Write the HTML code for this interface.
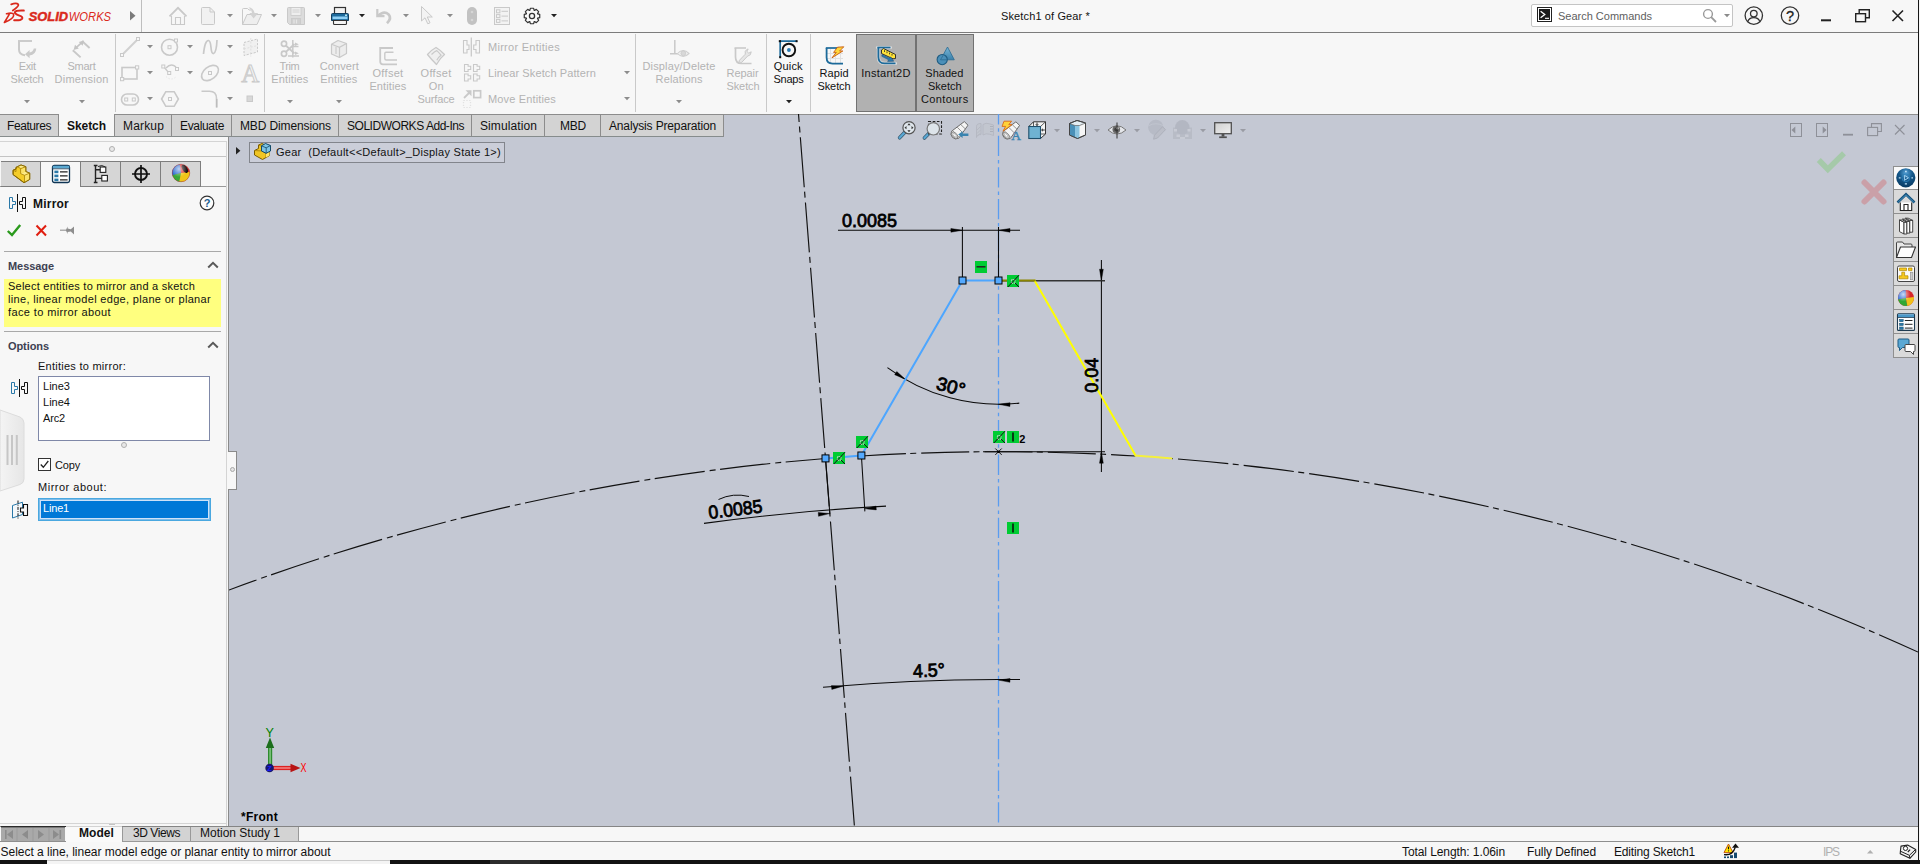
<!DOCTYPE html>
<html><head><meta charset="utf-8"><title>Sketch1 of Gear *</title>
<style>
*{box-sizing:border-box;margin:0;padding:0}
html,body{width:1920px;height:864px;overflow:hidden;background:#f7f7f7;font-family:"Liberation Sans",sans-serif;font-size:12px;color:#111}
.b{position:absolute}
.t{position:absolute;white-space:pre}
.ic{position:absolute;overflow:visible}
#vp{position:absolute;left:229px;top:114px}

</style></head><body>
<!-- title bar -->
<div class="b" style="left:0;top:32px;width:1918px;height:1px;background:#7c7c7c"></div>
<div class="b" style="left:141px;top:0;width:1px;height:32px;background:#bebebe"></div>
<!-- search box -->
<div class="b" style="left:1531px;top:4px;width:202px;height:23px;background:#fff;border:1px solid #c4c4c4;border-radius:2px"></div>
<!-- ribbon separators -->
<div class="b" style="left:115px;top:34px;width:1px;height:78px;background:#c9c9c9"></div>
<div class="b" style="left:264px;top:34px;width:1px;height:78px;background:#c9c9c9"></div>
<div class="b" style="left:635px;top:34px;width:1px;height:78px;background:#c9c9c9"></div>
<div class="b" style="left:766px;top:34px;width:1px;height:78px;background:#c9c9c9"></div>
<div class="b" style="left:810px;top:34px;width:1px;height:78px;background:#c9c9c9"></div>
<!-- pressed buttons -->
<div class="b" style="left:856px;top:34px;width:60px;height:78px;background:#b1b1b1;border:1px solid #727272"></div>
<div class="b" style="left:916px;top:34px;width:58px;height:78px;background:#b1b1b1;border:1px solid #727272"></div>
<!-- viewport bg -->
<div class="b" style="left:229px;top:114px;width:1689px;height:713px;background:#c4c8d3"></div>
<div class="b" style="left:724px;top:114px;width:1196px;height:1px;background:#8f8f8f"></div>
<!-- command manager tabs -->
<div class="b" style="left:0;top:114px;width:724px;height:23px;background:#d3d3d3;border-top:1px solid #8c8c8c;border-bottom:1px solid #868c8c"></div>
<div class="b" style="left:59px;top:114px;width:55px;height:22px;background:#f7f7f7"></div>
<div class="b" style="left:58px;top:114px;width:1px;height:23px;background:#8c8c8c"></div>
<div class="b" style="left:114px;top:114px;width:1px;height:23px;background:#8c8c8c"></div>
<div class="b" style="left:171px;top:114px;width:1px;height:23px;background:#8c8c8c"></div>
<div class="b" style="left:231px;top:114px;width:1px;height:23px;background:#8c8c8c"></div>
<div class="b" style="left:338px;top:114px;width:1px;height:23px;background:#8c8c8c"></div>
<div class="b" style="left:471px;top:114px;width:1px;height:23px;background:#8c8c8c"></div>
<div class="b" style="left:544px;top:114px;width:1px;height:23px;background:#8c8c8c"></div>
<div class="b" style="left:600px;top:114px;width:1px;height:23px;background:#8c8c8c"></div>
<div class="b" style="left:723px;top:114px;width:1px;height:23px;background:#8c8c8c"></div>
<!-- left panel -->
<div class="b" style="left:0;top:137px;width:228px;height:689px;background:#f7f7f7"></div>
<div class="b" style="left:228px;top:137px;width:1px;height:689px;background:#8a8a8a"></div>
<div class="b" style="left:226px;top:141px;width:1px;height:685px;background:#d4d4d4"></div>
<div class="b" style="left:0;top:141px;width:226px;height:1px;background:#d4d4d4"></div>
<div class="b" style="left:0;top:156px;width:226px;height:1px;background:#c4c4c4"></div>
<div class="b" style="left:109px;top:146px;width:6px;height:6px;border:1px solid #b0b0b0;border-radius:3px;background:#e8e8e8"></div>
<!-- panel tabs -->
<div class="b" style="left:0;top:186px;width:226px;height:1px;background:#9a9a9a"></div>
<div class="b" style="left:1px;top:161px;width:200px;height:26px;background:#d6d6d6;border-top:1px solid #7e7e7e;border-bottom:1px solid #7e7e7e"></div>
<div class="b" style="left:41px;top:162px;width:39px;height:25px;background:#f7f7f7"></div>
<div class="b" style="left:40px;top:161px;width:1px;height:26px;background:#7e7e7e"></div>
<div class="b" style="left:80px;top:161px;width:1px;height:26px;background:#7e7e7e"></div>
<div class="b" style="left:120px;top:161px;width:1px;height:26px;background:#7e7e7e"></div>
<div class="b" style="left:160px;top:161px;width:1px;height:26px;background:#7e7e7e"></div>
<div class="b" style="left:200px;top:161px;width:1px;height:26px;background:#7e7e7e"></div>
<!-- panel separators -->
<div class="b" style="left:4px;top:251px;width:217px;height:1px;background:#a9a9a9"></div>
<div class="b" style="left:4px;top:279px;width:217px;height:48px;background:#ffff7f"></div>
<div class="b" style="left:4px;top:331px;width:217px;height:1px;background:#a9a9a9"></div>
<!-- listbox -->
<div class="b" style="left:38px;top:376px;width:172px;height:65px;background:#fff;border:1px solid #7f88a8"></div>
<div class="b" style="left:121px;top:442px;width:6px;height:6px;border:1px solid #b0b0b0;border-radius:3px;background:#e8e8e8"></div>
<!-- checkbox -->
<div class="b" style="left:38px;top:458px;width:13px;height:13px;background:#fff;border:1px solid #333"></div>
<!-- mirror-about box -->
<div class="b" style="left:38px;top:498px;width:173px;height:23px;background:#0078d7;border:1px solid #4aa8e0;box-shadow:inset 0 0 0 1px #7cbcea,inset 0 0 0 2px #cfe2f8"></div>
<!-- left flyout handle -->
<svg class="ic" style="left:0;top:405px" width="26" height="92" viewBox="0 0 26 92"><defs><linearGradient id="hg" x1="0" x2="1"><stop offset="0" stop-color="#f4f4f4"/><stop offset="1" stop-color="#e6e6e6"/></linearGradient></defs><path d="M0 5 L20 12 Q24 14 24 18 L24 74 Q24 78 20 79.5 L0 86 Z" fill="url(#hg)" stroke="#dcdcdc" stroke-width="1"/><path d="M7.5 30v30M12 30v30M16.8 30v30" stroke="#c6c6c6" stroke-width="2"/></svg>
<!-- panel notch -->
<div class="b" style="left:228px;top:451px;width:9px;height:39px;background:#f7f7f7;border:1px solid #8a8a8a;border-left:none"></div>
<div class="b" style="left:229.5px;top:467px;width:5px;height:5px;border:1px solid #a8a8a8;border-radius:3px;background:#e4e4e4"></div>
<!-- feature tree header box -->
<div class="b" style="left:249px;top:142px;width:256px;height:21px;background:#cbced9;border:1px solid #82858c"></div>
<!-- task pane tabs -->
<div class="b" style="left:1893px;top:166px;width:25px;height:192px;background:#dadada;border:1px solid #8f8f8f;border-right:none"></div>
<div class="b" style="left:1894px;top:167px;width:24px;height:22px;background:#fafafa"></div>
<div class="b" style="left:1894px;top:189px;width:24px;height:1px;background:#8f8f8f"></div>
<div class="b" style="left:1894px;top:213px;width:24px;height:1px;background:#8f8f8f"></div>
<div class="b" style="left:1894px;top:237px;width:24px;height:1px;background:#8f8f8f"></div>
<div class="b" style="left:1894px;top:261px;width:24px;height:1px;background:#8f8f8f"></div>
<div class="b" style="left:1894px;top:285px;width:24px;height:1px;background:#8f8f8f"></div>
<div class="b" style="left:1894px;top:309px;width:24px;height:1px;background:#8f8f8f"></div>
<div class="b" style="left:1894px;top:333px;width:24px;height:1px;background:#8f8f8f"></div>
<!-- right edge -->
<div class="b" style="left:1918px;top:0;width:1px;height:860px;background:#161616"></div>
<div class="b" style="left:1919px;top:0;width:1px;height:860px;background:#f7f7f7"></div>
<!-- bottom -->
<div class="b" style="left:0;top:826px;width:1918px;height:1px;background:#858585"></div>
<div class="b" style="left:0;top:823px;width:226px;height:1px;background:#d4d4d4"></div>
<div class="b" style="left:0;top:827px;width:1918px;height:14px;background:#f7f7f7"></div>
<div class="b" style="left:0;top:841px;width:1918px;height:1px;background:#8e8e8e"></div>
<div class="b" style="left:1px;top:827px;width:64px;height:14px;background:#a9a9a9;border-top:1px solid #7a7a7a"></div>
<div class="b" style="left:122px;top:827px;width:69px;height:15px;background:#d3d3d3;border:1px solid #999;border-top:none"></div>
<div class="b" style="left:190px;top:827px;width:109px;height:15px;background:#d3d3d3;border:1px solid #999;border-top:none"></div>
<div class="b" style="left:66px;top:827px;width:56px;height:15px;background:#f9f9f9"></div>
<!-- nav-top --><div class="b" style="left:1px;top:826px;width:65px;height:1px;background:#2a2a2a"></div>
<!-- model-top --><div class="b" style="left:66px;top:826px;width:56px;height:1px;background:#d2d2d2"></div><div class="b" style="left:109px;top:824px;width:6px;height:1px;background:#c4c4c4"></div>
<!-- black bar -->
<div class="b" style="left:0;top:860px;width:1920px;height:4px;background:#121212"></div>
<div class="b" style="left:47px;top:860px;width:343px;height:4px;background:#f4f4f4"></div>
<div class="b" style="left:490px;top:860px;width:50px;height:4px;background:#2c2c2c"></div>

<!-- trim-underline --><div class="b" style="left:279.5px;top:71.5px;width:4.6px;height:1px;background:#b8b8b8"></div>
<!-- bar-line --><div class="b" style="left:47px;top:860px;width:343px;height:1px;background:#c9c9c9"></div>

<svg id="vp" width="1689" height="712" viewBox="229 114 1689 712">
<g fill="none" stroke="#111" stroke-width="1.15">
<path d="M825.50 458.48A2210 2210 0 0 0 229.00 589.99" stroke-dasharray="50.5 4.5 6 5" stroke-dashoffset="10.5"/>
<path d="M861.40 455.96A2210 2210 0 0 1 1135.60 455.96" stroke-dasharray="48 4.3 6 5" stroke-dashoffset="3.4"/>
<path d="M1171.50 458.48A2210 2210 0 0 1 1918.00 652.07" stroke-dasharray="50.5 4.5 6 5" stroke-dashoffset="59.5"/>
<path d="M798.5 114L825.5 458.4" stroke-dasharray="50 4.5 6 4.9" stroke-dashoffset="42"/>
<path d="M825.5 458.4L854.4 826" stroke-dasharray="49 4.5 5.5 5" stroke-dashoffset="0.75"/>
</g>
<g stroke="#5a9cf0" stroke-width="1.3" fill="none"><path d="M998.5 451.7V114" stroke-dasharray="0 3.9 3.5 3.9 20.3 0"/><path d="M998.5 451.7V826" stroke-dasharray="0 2.9 20.3 4 3.5 0.9"/></g>
<g fill="none" stroke="#0a0a0a" stroke-width="1.05">
<path d="M838 230.3H1020M962.4 227V277M998.5 227V277"/>
<path d="M1101.4 260V472M1002 280.7H1105M983 451.7H1105" />
<path d="M704.00 523.38A2158.5 2158.5 0 0 1 886.00 506.13"/>
<path d="M825.73 461.39L829.88 514.23M861.59 458.49L864.87 511.39"/>
<path d="M718.5 499.5Q733 492.5 749 496.5" stroke-width="1"/>
<path d="M887.42 367.56A186.3 186.3 0 0 0 1019.27 403.14"/>
<path d="M823.00 687.18A1982.2999999999997 1982.2999999999997 0 0 1 1020.00 679.52"/>
</g>
<path d="M962.40 230.30L950.90 228.40L950.90 232.20Z" fill="#000" stroke="#000" stroke-width="0.4"/>
<path d="M998.50 230.30L1010.00 232.20L1010.00 228.40Z" fill="#000" stroke="#000" stroke-width="0.4"/>
<path d="M1101.40 280.70L1103.30 269.20L1099.50 269.20Z" fill="#000" stroke="#000" stroke-width="0.4"/>
<path d="M1101.40 451.70L1099.50 463.20L1103.30 463.20Z" fill="#000" stroke="#000" stroke-width="0.4"/>
<path d="M829.83 513.53L818.22 512.54L818.51 516.33Z" fill="#000" stroke="#000" stroke-width="0.4"/>
<path d="M864.71 508.70L876.30 509.89L876.07 506.10Z" fill="#000" stroke="#000" stroke-width="0.4"/>
<path d="M998.50 404.30L1009.95 406.50L1010.05 402.70Z" fill="#000" stroke="#000" stroke-width="0.4"/>
<path d="M905.35 379.34L896.74 371.48L894.67 374.67Z" fill="#000" stroke="#000" stroke-width="0.4"/>
<path d="M998.50 680.10L1009.95 682.30L1010.05 678.50Z" fill="#000" stroke="#000" stroke-width="0.4"/>
<path d="M843.00 686.21L831.36 685.62L831.79 689.40Z" fill="#000" stroke="#000" stroke-width="0.4"/>
<g fill="none" stroke="#4da6ff" stroke-width="2" stroke-linecap="round"><path d="M825.5 458.4L861.4 455.5L962.5 280.5L998.5 280.5"/></g>
<path d="M998.5 280.8H1105" stroke="#333" stroke-width="1.1" fill="none"/>
<g fill="none" stroke="#ffff00" stroke-width="2" stroke-linecap="round"><path d="M1034.5 280.5L1135.6 455.5"/><path d="M1135.6 455.5L1171.5 458.4" stroke="#f4f03c" stroke-dasharray="2 1"/></g>
<path d="M1002 280.6H1035.5" stroke="#8a8400" stroke-width="2" fill="none"/>
<rect x="822.0" y="454.9" width="7" height="7" fill="#55aaff" stroke="#000" stroke-width="1"/>
<rect x="857.9" y="452.0" width="7" height="7" fill="#55aaff" stroke="#000" stroke-width="1"/>
<rect x="959.0" y="277.0" width="7" height="7" fill="#55aaff" stroke="#000" stroke-width="1"/>
<rect x="995.0" y="277.0" width="7" height="7" fill="#55aaff" stroke="#000" stroke-width="1"/>
<g transform="translate(975 261)"><rect width="12" height="12" fill="#00cc33"/><path d="M1.5 5.8H10.5" stroke="#222" stroke-width="1.5"/></g>
<g transform="translate(1007 275)"><rect width="12" height="12" fill="#00cc33"/><path d="M0.8 12L12 0.2M6.2 6.3L12 12" stroke="#111" stroke-width="1" fill="none"/><rect x="4.4" y="4.6" width="3.6" height="3.6" fill="#00cc33" stroke="#f0d4e6" stroke-width="0.9" stroke-dasharray="1.2 0.6"/><path d="M4 8.7L8.4 4" stroke="#111" stroke-width="0.9"/></g>
<g transform="translate(833 452)"><rect width="12" height="12" fill="#00cc33"/><path d="M0.8 12L12 0.2M6.2 6.3L12 12" stroke="#111" stroke-width="1" fill="none"/><rect x="4.4" y="4.6" width="3.6" height="3.6" fill="#00cc33" stroke="#f0d4e6" stroke-width="0.9" stroke-dasharray="1.2 0.6"/><path d="M4 8.7L8.4 4" stroke="#111" stroke-width="0.9"/></g>
<g transform="translate(856 436)"><rect width="12" height="12" fill="#00cc33"/><path d="M0.8 12L12 0.2M6.2 6.3L12 12" stroke="#111" stroke-width="1" fill="none"/><rect x="4.4" y="4.6" width="3.6" height="3.6" fill="#00cc33" stroke="#f0d4e6" stroke-width="0.9" stroke-dasharray="1.2 0.6"/><path d="M4 8.7L8.4 4" stroke="#111" stroke-width="0.9"/></g>
<g transform="translate(993 431)"><rect width="12" height="12" fill="#00cc33"/><path d="M0.8 12L12 0.2M6.2 6.3L12 12" stroke="#111" stroke-width="1" fill="none"/><rect x="4.4" y="4.6" width="3.6" height="3.6" fill="#00cc33" stroke="#f0d4e6" stroke-width="0.9" stroke-dasharray="1.2 0.6"/><path d="M4 8.7L8.4 4" stroke="#111" stroke-width="0.9"/></g>
<g transform="translate(1007 431)"><rect width="12" height="12" fill="#00cc33"/><path d="M6 1.5V10.5" stroke="#0a0a0a" stroke-width="1.5"/></g>
<g transform="translate(1007 522)"><rect width="12" height="12" fill="#00cc33"/><path d="M6 1.5V10.5" stroke="#0a0a0a" stroke-width="1.5"/></g>
<path d="M995.3 448.5L1001.7 454.9M1001.7 448.5L995.3 454.9" stroke="#000" stroke-width="0.9"/><circle cx="998.5" cy="451.7" r="1.3" fill="#000"/>
<text x="842" y="226.8" font-size="18.6" font-family="Liberation Sans, sans-serif" fill="#000" stroke="#000" stroke-width="0.8" textLength="55" lengthAdjust="spacingAndGlyphs">0.0085</text>
<text transform="translate(1098 392.8) rotate(-90)" font-size="18.6" font-family="Liberation Sans, sans-serif" fill="#000" stroke="#000" stroke-width="0.8" textLength="35" lengthAdjust="spacingAndGlyphs">0.04</text>
<text transform="translate(709.3 519) rotate(-7)" font-size="18.6" font-family="Liberation Sans, sans-serif" fill="#000" stroke="#000" stroke-width="0.8" textLength="54" lengthAdjust="spacingAndGlyphs">0.0085</text>
<text transform="translate(935.3 389) rotate(15)" font-size="18.6" font-family="Liberation Sans, sans-serif" fill="#000" stroke="#000" stroke-width="0.8" textLength="29" lengthAdjust="spacingAndGlyphs">30°</text>
<text transform="translate(913.2 677.4) rotate(-2.5)" font-size="18.6" font-family="Liberation Sans, sans-serif" fill="#000" stroke="#000" stroke-width="0.8" textLength="32" lengthAdjust="spacingAndGlyphs">4.5°</text>
<text x="1019.2" y="443.2" font-size="11" font-weight="700" font-family="Liberation Sans, sans-serif" fill="#000">2</text>
<g><rect x="268" y="746" width="4.2" height="20" fill="#2e8b2e"/><rect x="269.3" y="746" width="1.6" height="20" fill="#7fc47f"/><path d="M270 737.5L274.2 748H265.8Z" fill="#1c6e1c"/><rect x="273" y="765.9" width="19" height="4.2" fill="#d22"/><rect x="273" y="767.2" width="19" height="1.6" fill="#f08080"/><path d="M300.5 768L290.5 763.8V772.2Z" fill="#b81414"/><circle cx="269.6" cy="768" r="4.3" fill="#17176e"/><text x="267.2" y="770.8" font-family="Liberation Sans, sans-serif" font-size="7.5" font-weight="700" fill="#1a1aff">Z</text><text x="265.6" y="736.6" font-family="Liberation Sans, sans-serif" font-size="12.5" fill="#008000" textLength="8.4" lengthAdjust="spacingAndGlyphs">Y</text><text x="300.6" y="772.4" font-family="Liberation Sans, sans-serif" font-size="12.5" fill="#ff0000" textLength="6" lengthAdjust="spacingAndGlyphs">X</text></g>
</svg>
<svg class="ic" style="left:0px;top:0px" width="120" height="32" viewBox="0 0 120 32"><g fill="none" stroke="#da291c" stroke-linecap="round" stroke-linejoin="round">
<path d="M11.2 4.3Q16.5 2.6 18.3 4.4Q19.2 6.2 12.8 10.6" stroke-width="1.8"/>
<path d="M23.8 10.6Q15.6 10.2 14.8 12.3Q14.4 13.8 19.4 15.6Q23.4 17 22 18.8Q20.4 20.7 14.2 20.3" stroke-width="2"/>
<path d="M6.5 13.7Q13.6 12 13.7 15Q13.8 18.8 4.4 22.5L9.7 13.6" stroke-width="1.6"/></g>
<text x="28.8" y="20.7" font-family="Liberation Sans, sans-serif" font-size="12" font-weight="700" font-style="italic" fill="#da291c" stroke="#da291c" stroke-width="0.45" textLength="39.2" lengthAdjust="spacingAndGlyphs">SOLID</text>
<text x="68.8" y="20.7" font-family="Liberation Sans, sans-serif" font-size="12" font-style="italic" fill="#da291c" textLength="42.3" lengthAdjust="spacingAndGlyphs">WORKS</text></svg>
<svg class="ic" style="left:130px;top:11px" width="6" height="10" viewBox="0 0 6 10"><path d="M0 0L5.5 4.7L0 9.4Z" fill="#7a7a7a"/></svg>
<svg class="ic" style="left:168px;top:6px" width="20" height="20" viewBox="0 0 20 20"><g fill="none" stroke="#c9c9c9"><path d="M1.5 10.3L10 1.8L18.5 10.3" stroke-width="1.8"/><path d="M3.5 10V18.5H16.5V10" stroke-width="1.1"/><path d="M7.5 18.5V11.5H12.5V18.5" stroke-width="1.1"/></g></svg>
<svg class="ic" style="left:200px;top:6px" width="16" height="20" viewBox="0 0 16 20"><path d="M1.5 2.5Q1.5 1.5 2.5 1.5H10L14.5 6V17.5Q14.5 18.5 13.5 18.5H2.5Q1.5 18.5 1.5 17.5Z" fill="#f1f1f1" stroke="#c9c9c9" stroke-width="1"/><path d="M10 1.5V6H14.5" fill="none" stroke="#c9c9c9"/></svg>
<svg class="ic" style="left:227px;top:14px" width="6" height="4" viewBox="0 0 6 4"><path d="M0 0H6L3 3.3Z" fill="#8c8c8c"/></svg>
<svg class="ic" style="left:241px;top:6px" width="22" height="20" viewBox="0 0 22 20"><path d="M1.5 18.5V3.5Q1.5 2.5 2.5 2.5H6.5L8 4H10" fill="none" stroke="#c9c9c9"/><path d="M1.5 18.5L6 8.5H20.5L16 18.5Z" fill="#eee" stroke="#c9c9c9"/><path d="M7.5 1.2Q12.5 1.8 13.6 7H17.2L12.6 12.4L8.4 7H11Q10.6 3.4 7.5 1.2Z" fill="#d2d2d2"/></svg>
<svg class="ic" style="left:271px;top:14px" width="6" height="4" viewBox="0 0 6 4"><path d="M0 0H6L3 3.3Z" fill="#8c8c8c"/></svg>
<svg class="ic" style="left:286px;top:6px" width="20" height="20" viewBox="0 0 20 20"><path d="M1.5 2.5Q1.5 1.5 2.5 1.5H17.5Q18.5 1.5 18.5 2.5V18.5H3.5L1.5 16.5Z" fill="#dcdcdc" stroke="#c9c9c9"/><rect x="5" y="1.5" width="10" height="8" fill="#eee" stroke="#c9c9c9" stroke-width="0.8"/><path d="M6.5 4H13.5M6.5 6H13.5" stroke="#c9c9c9" stroke-width="0.8"/><rect x="5.5" y="12.5" width="9" height="6" fill="#d0d0d0" stroke="#c9c9c9" stroke-width="0.8"/><path d="M8 13.5V17.5M10.5 13.5V17.5" stroke="#e6e6e6" stroke-width="1.2"/></svg>
<svg class="ic" style="left:315px;top:14px" width="6" height="4" viewBox="0 0 6 4"><path d="M0 0H6L3 3.3Z" fill="#8c8c8c"/></svg>
<svg class="ic" style="left:330px;top:6px" width="20" height="20" viewBox="0 0 20 20"><rect x="4.5" y="1.5" width="11" height="7" fill="#f2f2f2" stroke="#333" stroke-width="1.2"/>
<path d="M1.5 8.5Q1.5 7.5 2.5 7.5H17.5Q18.5 7.5 18.5 8.5V14.5H1.5Z" fill="#1d6a9c" stroke="#123f60" stroke-width="1"/>
<rect x="2.5" y="10.5" width="15" height="2.6" fill="#8fd0f5"/><rect x="15" y="8.6" width="2" height="1.2" fill="#dff"/>
<path d="M3.5 14.5H16.5V17.5Q16.5 18.5 15.5 18.5H4.5Q3.5 18.5 3.5 17.5Z" fill="#f4f4f4" stroke="#333" stroke-width="1.1"/></svg>
<svg class="ic" style="left:359px;top:14px" width="6" height="4" viewBox="0 0 6 4"><path d="M0 0H6L3 3.3Z" fill="#222"/></svg>
<svg class="ic" style="left:375px;top:8px" width="18" height="16" viewBox="0 0 18 16"><path d="M2.3 1V8.2H9.5" fill="none" stroke="#c9c9c9" stroke-width="2.2"/><path d="M3 7.8Q9 2.3 13.6 6.4Q17 10.4 12 15.3" fill="none" stroke="#c9c9c9" stroke-width="2.7"/></svg>
<svg class="ic" style="left:403px;top:14px" width="6" height="4" viewBox="0 0 6 4"><path d="M0 0H6L3 3.3Z" fill="#8c8c8c"/></svg>
<svg class="ic" style="left:420px;top:5px" width="16" height="20" viewBox="0 0 16 20"><path d="M1.5 1.5V16L5 12.8L7.8 18.8L10 17.8L7.3 12H12.3Z" fill="#f3f3f3" stroke="#c9c9c9" stroke-width="1"/></svg>
<svg class="ic" style="left:447px;top:14px" width="6" height="4" viewBox="0 0 6 4"><path d="M0 0H6L3 3.3Z" fill="#8c8c8c"/></svg>
<svg class="ic" style="left:466px;top:6px" width="12" height="20" viewBox="0 0 12 20"><rect x="1" y="1" width="10" height="18" rx="5" fill="#c2c2c2"/><circle cx="6" cy="6" r="1.3" fill="#d6d6d6"/><circle cx="6" cy="14" r="1.3" fill="#d6d6d6"/></svg>
<svg class="ic" style="left:493px;top:6px" width="18" height="20" viewBox="0 0 18 20"><rect x="1.5" y="1.5" width="15" height="17" fill="#f3f3f3" stroke="#c9c9c9"/><g fill="none" stroke="#c9c9c9"><rect x="3.5" y="3.8" width="3.4" height="3"/><rect x="3.5" y="8.6" width="3.4" height="3"/><rect x="3.5" y="13.4" width="3.4" height="3"/><path d="M8.5 5.3H15M8.5 10.1H15M8.5 14.9H15"/></g></svg>
<svg class="ic" style="left:523px;top:7px" width="18" height="18" viewBox="0 0 18 18"><path d="M16.73 7.35L16.73 10.65L14.59 11.17L14.49 11.42L15.63 13.30L13.30 15.63L11.42 14.49L11.17 14.59L10.65 16.73L7.35 16.73L6.83 14.59L6.58 14.49L4.70 15.63L2.37 13.30L3.51 11.42L3.41 11.17L1.27 10.65L1.27 7.35L3.41 6.83L3.51 6.58L2.37 4.70L4.70 2.37L6.58 3.51L6.83 3.41L7.35 1.27L10.65 1.27L11.17 3.41L11.42 3.51L13.30 2.37L15.63 4.70L14.49 6.58L14.59 6.83Z" fill="#fafafa" stroke="#333" stroke-width="1.2" stroke-linejoin="round"/><circle cx="9" cy="9" r="2.6" fill="#fafafa" stroke="#333" stroke-width="1.3"/></svg>
<svg class="ic" style="left:551px;top:14px" width="6" height="4" viewBox="0 0 6 4"><path d="M0 0H6L3 3.3Z" fill="#222"/></svg>
<svg class="ic" style="left:1537px;top:7px" width="15" height="15" viewBox="0 0 15 15"><rect x="0.5" y="0.5" width="14" height="14" fill="#fff" stroke="#222"/><rect x="2" y="2" width="11" height="11" fill="#1a1a1a"/><path d="M3.6 4.2L7.8 7.5L3.6 10.8" fill="none" stroke="#fff" stroke-width="1.3"/><path d="M8 11.3H12" stroke="#fff" stroke-width="1.1"/></svg>
<svg class="ic" style="left:1702px;top:8px" width="16" height="16" viewBox="0 0 16 16"><circle cx="6" cy="6" r="4.4" fill="none" stroke="#9a9a9a" stroke-width="1.4"/><path d="M9.2 9.2L14 14" stroke="#9a9a9a" stroke-width="1.8"/></svg>
<svg class="ic" style="left:1724px;top:14px" width="6" height="4" viewBox="0 0 6 4"><path d="M0 0H6L3 3.3Z" fill="#8a8a8a"/></svg>
<svg class="ic" style="left:1743px;top:5px" width="22" height="22" viewBox="0 0 22 22"><circle cx="10.8" cy="10.6" r="8.7" fill="none" stroke="#333" stroke-width="1.3"/><circle cx="10.8" cy="8.6" r="3.3" fill="none" stroke="#333" stroke-width="1.3"/><path d="M4.8 16.6Q6 12.6 10.8 12.6Q15.6 12.6 16.8 16.6" fill="none" stroke="#333" stroke-width="1.3"/></svg>
<svg class="ic" style="left:1779px;top:5px" width="22" height="22" viewBox="0 0 22 22"><circle cx="11" cy="10.6" r="8.7" fill="none" stroke="#333" stroke-width="1.3"/><text x="11" y="15.6" text-anchor="middle" font-family="Liberation Sans, sans-serif" font-size="14.5" fill="#222" stroke="#222" stroke-width="0.3">?</text></svg>
<svg class="ic" style="left:1821px;top:19px" width="11" height="3" viewBox="0 0 11 3"><rect x="0" y="0.3" width="10" height="2" fill="#222"/></svg>
<svg class="ic" style="left:1854px;top:8px" width="18" height="16" viewBox="0 0 18 16"><g fill="none" stroke="#222" stroke-width="1.4"><path d="M5.2 5.5V1.7H15.3V9.7H11.5"/><rect x="1.7" y="5.7" width="9.8" height="8"/></g></svg>
<svg class="ic" style="left:1891px;top:9px" width="14" height="14" viewBox="0 0 14 14"><path d="M1.5 1.5L12 12M12 1.5L1.5 12" stroke="#222" stroke-width="1.6" fill="none"/></svg>
<svg class="ic" style="left:17px;top:39px" width="20" height="20" viewBox="0 0 20 20"><g fill="none" stroke="#cacaca"><path d="M1 2H15" stroke-width="1.9"/><path d="M2 2V10.5Q2 15.8 8 16.2" stroke-width="2"/></g><path d="M19.3 9.6Q18.8 16 12.6 16.6V19.2L8 15.2L12.6 11V13.4Q16 13 16.8 9.6Z" fill="#cacaca"/></svg>
<svg class="ic" style="left:24px;top:100px" width="6" height="4" viewBox="0 0 6 4"><path d="M0 0H6L3 3.3Z" fill="#8c8c8c"/></svg>
<svg class="ic" style="left:71px;top:39px" width="20" height="20" viewBox="0 0 20 20"><g fill="none" stroke="#c8c8c8" stroke-width="1.9"><path d="M1.8 11.2L9.6 18.4M11 2L18.6 9"/></g><path d="M4.6 9.2L11 3.4" stroke="#c4c4c4" stroke-width="1.6"/><path d="M2.6 11L4 5.8L7.8 9.6ZM13 1.6L11.6 6.8L7.8 3Z" fill="#c4c4c4"/></svg>
<svg class="ic" style="left:78.5px;top:100px" width="6" height="4" viewBox="0 0 6 4"><path d="M0 0H6L3 3.3Z" fill="#8c8c8c"/></svg>
<svg class="ic" style="left:119px;top:36px" width="22" height="22" viewBox="0 0 22 22"><path d="M3.5 18.5L18.5 3.5" stroke="#d0d0d0" stroke-width="2"/><rect x="1.5" y="17.5" width="3" height="3" fill="#f7f7f7" stroke="#c9c9c9" stroke-width="1"/><rect x="17.5" y="1.5" width="3" height="3" fill="#f7f7f7" stroke="#c9c9c9" stroke-width="1"/></svg>
<svg class="ic" style="left:147px;top:45px" width="6" height="4" viewBox="0 0 6 4"><path d="M0 0H6L3 3.3Z" fill="#8c8c8c"/></svg>
<svg class="ic" style="left:160px;top:37px" width="20" height="20" viewBox="0 0 20 20"><circle cx="9.5" cy="10.2" r="8" fill="none" stroke="#c9c9c9" stroke-width="1.6"/><rect x="8" y="8.7" width="3" height="3" fill="#f7f7f7" stroke="#c9c9c9" stroke-width="1"/><rect x="14.5" y="2" width="3" height="3" fill="#f7f7f7" stroke="#c9c9c9" stroke-width="1"/></svg>
<svg class="ic" style="left:187px;top:45px" width="6" height="4" viewBox="0 0 6 4"><path d="M0 0H6L3 3.3Z" fill="#8c8c8c"/></svg>
<svg class="ic" style="left:201px;top:38px" width="18" height="18" viewBox="0 0 18 18"><path d="M2.5 16Q4 2 7.5 2.5Q9.5 3 10 9.5Q10.5 16 12.5 15.5Q15.5 14.5 16 2" fill="none" stroke="#c9c9c9" stroke-width="1.7"/></svg>
<svg class="ic" style="left:227px;top:45px" width="6" height="4" viewBox="0 0 6 4"><path d="M0 0H6L3 3.3Z" fill="#8c8c8c"/></svg>
<svg class="ic" style="left:242px;top:37px" width="18" height="20" viewBox="0 0 18 20"><path d="M2 5.5L15.5 2V15L2 18.5Z" fill="#f0f0f0" stroke="#c9c9c9" stroke-width="1" stroke-dasharray="2.2 1.4"/><path d="M8.8 1V19.5M2 12L15.5 8.5" stroke="#dadada" stroke-width="0.8" stroke-dasharray="2 1.5"/></svg>
<svg class="ic" style="left:119px;top:63px" width="22" height="20" viewBox="0 0 22 20"><rect x="3" y="4.5" width="15" height="11.5" fill="none" stroke="#c9c9c9" stroke-width="1.6"/><rect x="1.5" y="14.5" width="3.2" height="3.2" fill="#f7f7f7" stroke="#c9c9c9" stroke-width="1"/><rect x="16.5" y="2.8" width="3.2" height="3.2" fill="#f7f7f7" stroke="#c9c9c9" stroke-width="1"/></svg>
<svg class="ic" style="left:147px;top:71px" width="6" height="4" viewBox="0 0 6 4"><path d="M0 0H6L3 3.3Z" fill="#8c8c8c"/></svg>
<svg class="ic" style="left:160px;top:62px" width="21" height="20" viewBox="0 0 21 20"><path d="M6 6Q11 0.5 16 5" fill="none" stroke="#c9c9c9" stroke-width="1.5"/><path d="M3.5 4.5L9 11" stroke="#c9c9c9" stroke-width="1.2"/><rect x="1.8" y="3" width="3" height="3" fill="#f7f7f7" stroke="#c9c9c9" stroke-width="1"/><rect x="7.7" y="9.5" width="3" height="3" fill="#f7f7f7" stroke="#c9c9c9" stroke-width="1"/><rect x="15.5" y="5.5" width="3" height="3" fill="#f7f7f7" stroke="#c9c9c9" stroke-width="1"/><path d="M6 14.5Q11 19.5 16.5 14.5" fill="none" stroke="#e6e6e6" stroke-width="1" stroke-dasharray="1.3 1.8"/></svg>
<svg class="ic" style="left:187px;top:71px" width="6" height="4" viewBox="0 0 6 4"><path d="M0 0H6L3 3.3Z" fill="#8c8c8c"/></svg>
<svg class="ic" style="left:200px;top:63px" width="20" height="20" viewBox="0 0 20 20"><ellipse cx="10" cy="10" rx="9.6" ry="6.2" transform="rotate(-38 10 10)" fill="none" stroke="#c9c9c9" stroke-width="1.6"/><rect x="8.5" y="8.5" width="3" height="3" fill="#f7f7f7" stroke="#c9c9c9" stroke-width="1"/></svg>
<svg class="ic" style="left:227px;top:71px" width="6" height="4" viewBox="0 0 6 4"><path d="M0 0H6L3 3.3Z" fill="#8c8c8c"/></svg>
<svg class="ic" style="left:240px;top:62px" width="20" height="22" viewBox="0 0 20 22"><text x="10.2" y="20.3" text-anchor="middle" font-family="Liberation Serif, serif" font-size="25" fill="#f4f4f4" stroke="#c9c9c9" stroke-width="0.9">A</text></svg>
<svg class="ic" style="left:120px;top:92px" width="20" height="15" viewBox="0 0 20 15"><rect x="1.5" y="2" width="17" height="11" rx="5.5" fill="none" stroke="#c9c9c9" stroke-width="1.6"/><rect x="4.7" y="6" width="3" height="3" fill="#f7f7f7" stroke="#c9c9c9" stroke-width="1"/><rect x="12.3" y="6" width="3" height="3" fill="#f7f7f7" stroke="#c9c9c9" stroke-width="1"/></svg>
<svg class="ic" style="left:147px;top:97px" width="6" height="4" viewBox="0 0 6 4"><path d="M0 0H6L3 3.3Z" fill="#8c8c8c"/></svg>
<svg class="ic" style="left:160px;top:90px" width="20" height="18" viewBox="0 0 20 18"><path d="M1.6 9L5.8 1.7H14.2L18.4 9L14.2 16.3H5.8Z" fill="none" stroke="#c9c9c9" stroke-width="1.6"/><rect x="8.5" y="7.5" width="3" height="3" fill="#f7f7f7" stroke="#c9c9c9" stroke-width="1"/></svg>
<svg class="ic" style="left:200px;top:89px" width="20" height="20" viewBox="0 0 20 20"><path d="M1.5 2.3H9.5Q16.5 2.3 16.5 9.5V18.5" fill="none" stroke="#c9c9c9" stroke-width="1.6"/><path d="M16.9 10V18.5" stroke="#b4b4b4" stroke-width="1"/></svg>
<svg class="ic" style="left:227px;top:97px" width="6" height="4" viewBox="0 0 6 4"><path d="M0 0H6L3 3.3Z" fill="#8c8c8c"/></svg>
<svg class="ic" style="left:246px;top:95px" width="8" height="8" viewBox="0 0 8 8"><rect x="1" y="1" width="5.5" height="5.5" fill="#d8d8d8" stroke="#c9c9c9" stroke-width="1"/></svg>
<svg class="ic" style="left:280px;top:39px" width="20" height="20" viewBox="0 0 20 20"><g fill="none" stroke="#c9c9c9"><circle cx="4" cy="4.8" r="2.6" stroke-width="1.7"/><circle cx="4" cy="14.8" r="2.6" stroke-width="1.7"/><path d="M5.8 6.5L14.5 14.5M5.8 13L14.5 5" stroke-width="1.7"/><path d="M12.8 1V18.5" stroke-width="1.5"/><path d="M8 17H19M13 7.5H18.5" stroke-width="1.3"/></g><path d="M15 3.5L18.8 5.2L15 6.9ZM15 12.5L18.8 14.2L15 15.9Z" fill="#c9c9c9"/></svg>
<svg class="ic" style="left:286.5px;top:100px" width="6" height="4" viewBox="0 0 6 4"><path d="M0 0H6L3 3.3Z" fill="#8c8c8c"/></svg>
<svg class="ic" style="left:330px;top:39px" width="18" height="20" viewBox="0 0 18 20"><path d="M1.5 5.3L8 1.5L16.5 4.5V14.5L9.5 18.5L1.5 15Z" fill="#ededed" stroke="#c9c9c9" stroke-width="1.2" stroke-linejoin="round"/><path d="M1.5 5.3L9.5 8.3L16.5 4.5M9.5 8.3V18.5" fill="none" stroke="#c9c9c9" stroke-width="1.2"/><path d="M6 8V15" stroke="#d0d0d0" stroke-width="1.4"/></svg>
<svg class="ic" style="left:335.5px;top:100px" width="6" height="4" viewBox="0 0 6 4"><path d="M0 0H6L3 3.3Z" fill="#8c8c8c"/></svg>
<svg class="ic" style="left:378px;top:46px" width="20" height="20" viewBox="0 0 20 20"><g fill="none" stroke="#c9c9c9"><path d="M15 2H2.2V15.5Q2.2 18.3 5 18.3H19" stroke-width="1.8"/><path d="M15.5 6.2H8Q6.8 6.2 6.8 7.5V12.5Q6.8 14 8.2 14H19" stroke-width="1.4"/></g></svg>
<svg class="ic" style="left:426px;top:46px" width="20" height="20" viewBox="0 0 20 20"><path d="M1.5 8.5Q6 3.5 10 1.5Q15 4.5 18.5 8.5Q14 12 10.5 18.5Q5.5 13.5 1.5 8.5Z" fill="#efefef" stroke="#c9c9c9" stroke-width="1.3" stroke-linejoin="round"/><path d="M5.5 8.5Q8.5 5.5 10.8 4.6Q13 6.5 15 9.2Q12.2 11.2 10.8 14.2" fill="none" stroke="#c9c9c9" stroke-width="1.2"/></svg>
<svg class="ic" style="left:462px;top:37px" width="20" height="20" viewBox="0 0 20 20"><g fill="none" stroke="#c9c9c9" stroke-width="1.1"><path d="M9.3 0.5V19.5" stroke-width="1.3"/><path d="M1.5 3.5H5V8H7V12.5H5V16H1.5Z"/><path d="M17.5 3.5H14V8H11.7V12.5H14V16H17.5Z"/></g></svg>
<svg class="ic" style="left:463px;top:63px" width="20" height="20" viewBox="0 0 20 20"><g fill="none" stroke="#c9c9c9" stroke-width="1.1"><path d="M1.5 1.5H5.1V3.3H7.7V6.5H5.1V8.5H1.5Z"/><path d="M10.5 1.5H14.1V3.3H16.7V6.5H14.1V8.5H10.5Z"/><path d="M1.5 11H5.1V12.8H7.7V16H5.1V18H1.5Z"/><path d="M10.5 11H14.1V12.8H16.7V16H14.1V18H10.5Z"/></g></svg>
<svg class="ic" style="left:624px;top:71px" width="6" height="4" viewBox="0 0 6 4"><path d="M0 0H6L3 3.3Z" fill="#8c8c8c"/></svg>
<svg class="ic" style="left:462px;top:89px" width="20" height="20" viewBox="0 0 20 20"><path d="M2 9L8.5 2.5" stroke="#c9c9c9" stroke-width="1.8"/><path d="M3.5 1.3H9.5V7.3Z" fill="#c9c9c9"/><rect x="11.8" y="1.8" width="6.8" height="6.8" fill="none" stroke="#c9c9c9" stroke-width="1.7"/><rect x="1.5" y="11.5" width="7" height="7" fill="none" stroke="#e2e2e2" stroke-width="1.2" stroke-dasharray="1.4 1.4"/></svg>
<svg class="ic" style="left:624px;top:97px" width="6" height="4" viewBox="0 0 6 4"><path d="M0 0H6L3 3.3Z" fill="#8c8c8c"/></svg>
<svg class="ic" style="left:669px;top:39px" width="21" height="20" viewBox="0 0 21 20"><path d="M5.8 1V14.5M1 14.7H11" stroke="#c9c9c9" stroke-width="1.5" fill="none"/><path d="M8.5 14.5Q14 8.5 20 14.5Q14 20.5 8.5 14.5Z" fill="#f2f2f2" stroke="#d0d0d0" stroke-width="1.1"/><circle cx="14.3" cy="14.3" r="2.4" fill="#d8d8d8" stroke="#c9c9c9" stroke-width="0.8"/></svg>
<svg class="ic" style="left:675.5px;top:100px" width="6" height="4" viewBox="0 0 6 4"><path d="M0 0H6L3 3.3Z" fill="#8c8c8c"/></svg>
<svg class="ic" style="left:733px;top:46px" width="20" height="20" viewBox="0 0 20 20"><g fill="none" stroke="#c9c9c9"><path d="M1.5 2H13" stroke-width="1.6"/><path d="M2.5 2V11Q2.5 17.5 8.5 17.5H18.5" stroke-width="1.7"/></g><path d="M6.5 14.2L12.3 8.2Q11.3 5 14 3.3L15.2 3L13.8 5.3L15.8 7.2L18.2 5.8Q18.3 9.5 14.5 10.2L8.8 16.3Q7 17.3 6.2 16Q5.8 15 6.5 14.2Z" fill="#e6e6e6" stroke="#c9c9c9" stroke-width="1"/></svg>
<svg class="ic" style="left:778px;top:39px" width="20" height="20" viewBox="0 0 20 20"><path d="M1.2 2.2H19.2M2.2 2.2V18.5" fill="none" stroke="#1c6a9a" stroke-width="1.7"/><rect x="0.8" y="1.2" width="2.2" height="2" fill="#111"/><rect x="17.6" y="1.2" width="2" height="2" fill="#111"/><rect x="1.2" y="17.2" width="2" height="2" fill="#111"/><circle cx="10.9" cy="11" r="6.3" fill="#f7f7f7" stroke="#111" stroke-width="1.9"/><circle cx="10.9" cy="11" r="1.9" fill="#2a7ab0"/></svg>
<svg class="ic" style="left:785.5px;top:100px" width="6" height="4" viewBox="0 0 6 4"><path d="M0 0H6L3 3.3Z" fill="#222"/></svg>
<svg class="ic" style="left:824px;top:46px" width="21" height="20" viewBox="0 0 21 20"><g stroke="#e0e0e0" stroke-width="1" fill="none"><path d="M6.5 3V17M11.5 3V17M16.5 8V17M3 7.5H19M3 12.5H19"/></g>
<path d="M1.8 2H15.5" stroke="#1c6a9a" stroke-width="1.7" fill="none"/><path d="M2.6 2V11.5Q2.6 17.6 8.6 17.6H19" fill="none" stroke="#1c6a9a" stroke-width="1.8"/>
<path d="M13.5 1.2L19.8 0.8L15.6 5H18.8L8 11.8L12.3 6.4H9.6Z" fill="#ffd83a" stroke="#c85a10" stroke-width="0.9" stroke-linejoin="round"/></svg>
<svg class="ic" style="left:875px;top:45px" width="22" height="21" viewBox="0 0 22 21"><path d="M2.4 2.5H15.5M3.4 2.5V12Q3.4 18.4 9.4 18.4H20.5" fill="none" stroke="#dcdcdc" stroke-width="3.2" stroke-linecap="round"/>
<path d="M2.4 2.5H15.5" stroke="#1c6a9a" stroke-width="1.7" fill="none"/><path d="M3.4 2.5V12Q3.4 18.4 9.4 18.4H20.5" fill="none" stroke="#1c6a9a" stroke-width="1.8"/>
<path d="M6.5 5L8.5 3.5L20.5 9.5V13.5L18 13.8L6.5 8.5Z" fill="#ffe23a" stroke="#222" stroke-width="0.9" stroke-linejoin="round"/><path d="M9.5 5.2V7M12 6.4V8.2M14.5 7.6V9.4M17 8.8V10.6" stroke="#222" stroke-width="0.8"/>
<path d="M7 9.5L14.5 13.2L15.4 11.8L18.8 16.2L12.6 16.4L13.6 14.8L6.8 11.3Z" fill="#2a7ab0" stroke="#1a4a70" stroke-width="0.5"/></svg>
<svg class="ic" style="left:935px;top:45px" width="22" height="22" viewBox="0 0 22 22"><defs><linearGradient id="tg" x1="0" y1="0" x2="0" y2="1"><stop offset="0" stop-color="#7ab8d8"/><stop offset="1" stop-color="#3a80aa"/></linearGradient></defs>
<path d="M12.5 2L19.3 14.8H5.5Z" fill="url(#tg)" stroke="#2a6a90" stroke-width="0.8" stroke-linejoin="round"/><circle cx="7.2" cy="14.6" r="5.1" fill="#4b8fb8" stroke="#1f5c82" stroke-width="1.1"/><path d="M5.5 14.8L8.5 9.6" stroke="#2a6a90" stroke-width="0.8"/><path d="M5.5 14.8H12.3" stroke="#2a6a90" stroke-width="0.8"/></svg>
<svg class="ic" style="left:897px;top:120px" width="20" height="20" viewBox="0 0 20 20"><path d="M8.3 11.7L2.6 17.8" stroke="#3a5a70" stroke-width="3.6" stroke-linecap="round"/><path d="M8.3 11.7L2.6 17.8" stroke="#5aa8d4" stroke-width="2.2" stroke-linecap="round"/>
<circle cx="12" cy="7.7" r="6.1" fill="#dfe6ec" stroke="#555" stroke-width="1.2"/><path d="M12 3.2L13.6 5.2H10.4ZM12 12.2L13.6 10.2H10.4ZM7.5 7.7L9.5 6.1V9.3ZM16.5 7.7L14.5 6.1V9.3Z" fill="#333"/></svg>
<svg class="ic" style="left:922px;top:120px" width="21" height="20" viewBox="0 0 21 20"><path d="M7.8 12.4L2.4 18" stroke="#3a5a70" stroke-width="3.6" stroke-linecap="round"/><path d="M7.8 12.4L2.4 18" stroke="#5aa8d4" stroke-width="2.2" stroke-linecap="round"/>
<rect x="6.5" y="1.5" width="13" height="12.5" fill="none" stroke="#222" stroke-width="1.1" stroke-dasharray="2.6 1.6"/><circle cx="11.3" cy="8.8" r="6.2" fill="#dde4ea" stroke="#777" stroke-width="1.2"/></svg>
<svg class="ic" style="left:949px;top:120px" width="21" height="20" viewBox="0 0 21 20"><path d="M15.3 1.6L19 5.2L9.8 18.2Q6.2 20 3.4 17.4Q0.8 14.4 2.6 11.2Z" fill="#f4f4f4" stroke="#6a6a6a" stroke-width="1" stroke-linejoin="round"/><path d="M11.6 4.4L16.6 9.2M8.2 7.2L14 13" stroke="#8a8a8a" stroke-width="0.9"/><path d="M3.5 10.6L10.3 17.4" stroke="#9a9a9a" stroke-width="0.8"/><ellipse cx="5.6" cy="15.2" rx="4" ry="2.3" transform="rotate(45 5.6 15.2)" fill="#d4d4d4" stroke="#777" stroke-width="0.8"/><ellipse cx="5.6" cy="15.2" rx="2.2" ry="1.1" transform="rotate(45 5.6 15.2)" fill="#f4f4f4" stroke="#999" stroke-width="0.5"/>
<path d="M9.2 14.6L13.6 11.2V13.4H19.4V15.9H13.6V18Z" fill="#3a84b0"/></svg>
<svg class="ic" style="left:975px;top:121px" width="20" height="18" viewBox="0 0 20 18"><g opacity="0.55"><path d="M1.5 5.5Q1.5 2.5 6 2.5V13.5Q1.5 13.5 1.5 16.5ZM8 3.5Q11 1.5 14.5 2.8L18.5 4V14.5L14.5 13.2Q11 12 8 14Z" fill="#c2c5cd" stroke="#a4a7b0" stroke-width="0.8"/><path d="M2 9L5.5 5.5M2 12.5L5.5 9M2 15.5L5.5 12" stroke="#a9acb4" stroke-width="0.9"/><path d="M15 5.5H18M15 8H18M15 10.5H18" stroke="#9a9da6" stroke-width="1"/></g></svg>
<svg class="ic" style="left:1000px;top:120px" width="22" height="20" viewBox="0 0 22 20"><g transform="translate(0.6 0.2)"><path d="M15.3 1.6L19 5.2L9.8 18.2Q6.2 20 3.4 17.4Q0.8 14.4 2.6 11.2Z" fill="#f4f4f4" stroke="#6a6a6a" stroke-width="1" stroke-linejoin="round"/><path d="M11.6 4.4L16.6 9.2M8.2 7.2L14 13" stroke="#8a8a8a" stroke-width="0.9"/><path d="M3.5 10.6L10.3 17.4" stroke="#9a9a9a" stroke-width="0.8"/><ellipse cx="5.6" cy="15.2" rx="4" ry="2.3" transform="rotate(45 5.6 15.2)" fill="#d4d4d4" stroke="#777" stroke-width="0.8"/><ellipse cx="5.6" cy="15.2" rx="2.2" ry="1.1" transform="rotate(45 5.6 15.2)" fill="#f4f4f4" stroke="#999" stroke-width="0.5"/></g>
<path d="M4 1.2H11.6L8.8 4.6H12L3 11.2L5.6 6.4H2Z" fill="#ffd23a" stroke="#d86a1a" stroke-width="0.9" stroke-linejoin="round"/>
<text x="16" y="19.6" text-anchor="middle" font-family="Liberation Serif, serif" font-size="13.5" fill="#3a84b0" stroke="#3a84b0" stroke-width="0.4">A</text></svg>
<svg class="ic" style="left:1027px;top:120px" width="20" height="20" viewBox="0 0 20 20"><path d="M1.8 6.5L6.5 1.8H18.5V14L13.5 18.5" fill="#f4f4f4" stroke="#333" stroke-width="1"/><path d="M13.5 6.5L18.5 1.8M6.5 1.8V6.5M18.5 14H13.5" stroke="#333" stroke-width="0.8" fill="none"/><rect x="1.8" y="6.5" width="11.7" height="12" fill="#6fb2d2" stroke="#1f4f6c" stroke-width="1.1"/><path d="M10 2.5V5.5M8.8 4.2L10 5.6L11.2 4.2M17.8 10H14.8M16 8.8L14.6 10L16 11.2" stroke="#222" stroke-width="0.9" fill="none"/></svg>
<svg class="ic" style="left:1054px;top:129px" width="6" height="4" viewBox="0 0 6 4"><path d="M0 0H6L3 3.3Z" fill="#9a9ca4"/></svg>
<svg class="ic" style="left:1068px;top:119px" width="19" height="21" viewBox="0 0 19 21"><path d="M1.5 4.5L9 1.5L17.5 4V16L9.5 19.5L1.5 16Z" fill="#f6f6f6" stroke="#444" stroke-width="1" stroke-linejoin="round"/><path d="M1.5 4.5L7 6.5V18.5L1.5 16Z" fill="#4a90b8"/><path d="M7 6.5H11.5V19L9.5 19.5L7 18.5Z" fill="#8cc4e0"/><path d="M1.5 4.5L9 1.5L17.5 4L11.5 6.5H7Z" fill="#e4eef4" stroke="#444" stroke-width="0.6"/><path d="M1.5 4.5L9 1.5L17.5 4V16L9.5 19.5L1.5 16Z" fill="none" stroke="#444" stroke-width="1" stroke-linejoin="round"/></svg>
<svg class="ic" style="left:1094px;top:129px" width="6" height="4" viewBox="0 0 6 4"><path d="M0 0H6L3 3.3Z" fill="#9a9ca4"/></svg>
<svg class="ic" style="left:1107px;top:122px" width="20" height="17" viewBox="0 0 20 17"><path d="M1 8Q10 -0.5 19 8Q10 16 1 8Z" fill="#e4e6ea" stroke="#777" stroke-width="1"/><circle cx="9.3" cy="7.6" r="3.8" fill="#6a6a6a"/><circle cx="9.3" cy="7.6" r="2" fill="#3c3c3c"/><circle cx="10.6" cy="6.2" r="1.3" fill="#b8b8b8"/><path d="M10 0.5V16.5" stroke="#333" stroke-width="1"/></svg>
<svg class="ic" style="left:1134px;top:129px" width="6" height="4" viewBox="0 0 6 4"><path d="M0 0H6L3 3.3Z" fill="#9a9ca4"/></svg>
<svg class="ic" style="left:1147px;top:119px" width="20" height="21" viewBox="0 0 20 21"><g opacity="0.8"><circle cx="8.8" cy="8.3" r="7.6" fill="#b4b8c3"/><path d="M2 6.5Q9 3 15.8 6.5" stroke="#c2c6d0" stroke-width="0.9" fill="none"/><path d="M7.5 16.2L15.5 7.8L18.5 10.6L10.5 19L6.6 20.2Z" fill="#b9bcc6" stroke="#a6a9b3" stroke-width="0.9"/></g></svg>
<svg class="ic" style="left:1172px;top:119px" width="21" height="21" viewBox="0 0 21 21"><g opacity="0.8"><path d="M1 8.5H20V20H1Z" fill="#b6bac4"/><circle cx="10.3" cy="8.3" r="7.2" fill="#b0b4bf"/><path d="M4.5 15.5H8V18H4.5ZM13 15.5H16.5V18H13ZM8 18H13V20H8ZM15.5 10H18.5V12.5H15.5ZM2 10H5V12.5H2Z" fill="#c9ccd5"/></g></svg>
<svg class="ic" style="left:1200px;top:129px" width="6" height="4" viewBox="0 0 6 4"><path d="M0 0H6L3 3.3Z" fill="#9a9ca4"/></svg>
<svg class="ic" style="left:1213px;top:121px" width="20" height="18" viewBox="0 0 20 18"><defs><linearGradient id="mg" x1="0" y1="0" x2="1" y2="1"><stop offset="0" stop-color="#cfcfcf"/><stop offset="1" stop-color="#efefef"/></linearGradient></defs><rect x="1.7" y="1.7" width="16.6" height="11" fill="url(#mg)" stroke="#505050" stroke-width="1.3"/><rect x="8.6" y="13" width="2.8" height="2.6" fill="#505050"/><rect x="6.2" y="15.4" width="7.6" height="1.7" fill="#505050"/></svg>
<svg class="ic" style="left:1240px;top:129px" width="6" height="4" viewBox="0 0 6 4"><path d="M0 0H6L3 3.3Z" fill="#9a9ca4"/></svg>
<svg class="ic" style="left:1789px;top:122px" width="14" height="16" viewBox="0 0 14 16"><rect x="1.5" y="1.5" width="11" height="13" fill="none" stroke="#8e9098" stroke-width="1"/><path d="M2.5 8L6.3 4.6V11.4Z" fill="#8e9098"/></svg>
<svg class="ic" style="left:1815px;top:122px" width="14" height="16" viewBox="0 0 14 16"><rect x="1.5" y="1.5" width="11" height="13" fill="none" stroke="#8e9098" stroke-width="1"/><path d="M11.5 8L7.7 4.6V11.4Z" fill="#8e9098"/></svg>
<svg class="ic" style="left:1843px;top:133px" width="11" height="4" viewBox="0 0 11 4"><rect x="0" y="0.8" width="10" height="1.8" fill="#8e9098"/></svg>
<svg class="ic" style="left:1866px;top:122px" width="18" height="16" viewBox="0 0 18 16"><g fill="none" stroke="#8e9098" stroke-width="1.1"><path d="M5.5 5.2V1.6H15.4V9.5H11.6"/><rect x="1.6" y="5.4" width="10" height="8.2"/></g></svg>
<svg class="ic" style="left:1894px;top:124px" width="12" height="12" viewBox="0 0 12 12"><path d="M1 1L10.5 10.5M10.5 1L1 10.5" stroke="#8e9098" stroke-width="1.1" fill="none"/></svg>
<svg class="ic" style="left:1815px;top:147px" width="32" height="26" viewBox="0 0 32 26"><path d="M3.8 13L12.8 22.3L29 6.2" fill="none" stroke="#a5c9a9" stroke-width="5.6"/></svg>
<svg class="ic" style="left:1860px;top:177.6px" width="28" height="28" viewBox="0 0 28 28"><path d="M4.5 4.5L23.5 23.5M23.5 4.5L4.5 23.5" fill="none" stroke="#caa0a8" stroke-width="6" stroke-linecap="round"/></svg>
<svg class="ic" style="left:12px;top:164px" width="20" height="20" viewBox="0 0 20 20"><path d="M5.5 2.7L9 1L13.8 2.7V7.6L17.7 9.1V15.4L12 18.7L1.1 10.6V6.2L4 5V3.4Z" fill="#f4cc28" stroke="#8a6a00" stroke-width="1" stroke-linejoin="round"/>
<path d="M5.5 2.7L9 1L13.8 2.7L10.2 4.3Z" fill="#fdeb8a"/><path d="M8.6 5.2L13.8 2.9V7.6L8.6 9.6Z" fill="#fbe26a"/><path d="M8.6 9.6L13.8 7.6L17.7 9.1L12.5 11.3Z" fill="#fdeb8a"/><path d="M12.5 11.3L17.7 9.1V15.4L12.5 18.3Z" fill="#fbe26a"/>
<path d="M5.5 2.7L8.6 4.6V9.6L12.5 11.3V18.3M8.6 4.6L13.8 2.7M12.5 11.3L17.7 9.1M1.1 6.2L4 7.6V5" fill="none" stroke="#a88208" stroke-width="0.8"/>
<path d="M5.5 2.7L9 1L13.8 2.7V7.6L17.7 9.1V15.4L12 18.7L1.1 10.6V6.2L4 5V3.4Z" fill="none" stroke="#8a6a00" stroke-width="1" stroke-linejoin="round"/></svg>
<svg class="ic" style="left:51px;top:164px" width="20" height="20" viewBox="0 0 20 20"><rect x="1.5" y="1.5" width="17" height="17" rx="1.8" fill="#fff" stroke="#0f3554" stroke-width="1.3"/><path d="M1.8 2.8Q1.8 1.8 2.8 1.8H17.2Q18.2 1.8 18.2 2.8V4.6H1.8Z" fill="#5aa8d0"/><path d="M1.8 4.8H18.2" stroke="#1d3a50" stroke-width="0.8"/>
<g fill="#2a78a8"><rect x="3.4" y="6.6" width="4" height="2.6"/><rect x="3.4" y="10.6" width="4" height="2.6"/><rect x="3.4" y="14.6" width="4" height="2.6"/></g><path d="M9 7.9H16.6M9 11.9H16.6M9 15.9H16.6" stroke="#222" stroke-width="1.1"/></svg>
<svg class="ic" style="left:93px;top:164px" width="17" height="20" viewBox="0 0 17 20"><path d="M2.5 1.5V18.5M0.8 1.5H4.5M0.8 18.5H4.5M2.5 5.8H8M2.5 14.4H9.5" stroke="#222" stroke-width="1.4" fill="none"/><rect x="7.2" y="3" width="5.6" height="5.4" fill="#fff" stroke="#222" stroke-width="1.1"/><rect x="8.8" y="11.4" width="5.6" height="5.6" fill="#fff" stroke="#222" stroke-width="1.1"/><path d="M5 2.5Q9 0.5 12 2.8" fill="none" stroke="#222" stroke-width="1"/></svg>
<svg class="ic" style="left:131px;top:164px" width="20" height="20" viewBox="0 0 20 20"><circle cx="10" cy="10" r="6" fill="none" stroke="#111" stroke-width="1.9"/><path d="M10 1V19M1 10H19" stroke="#111" stroke-width="1.7"/></svg>
<svg class="ic" style="left:171px;top:163px" width="20" height="20" viewBox="0 0 20 20"><defs><radialGradient id="bg1" cx="0.4" cy="0.3" r="0.8"><stop offset="0" stop-color="#fff" stop-opacity="0.7"/><stop offset="0.5" stop-color="#fff" stop-opacity="0"/></radialGradient><clipPath id="bc"><circle cx="10" cy="10" r="8.8"/></clipPath></defs>
<g clip-path="url(#bc)"><rect width="20" height="20" fill="#d8282a"/><path d="M0 0H8.5L10 10L0 13Z" fill="#2a6ad0"/><path d="M0 12.5L10 10L11 20H0Z" fill="#3aa838"/><path d="M10 10L20 8.5V20H8Z" fill="#f0c418"/><ellipse cx="13.8" cy="5.8" rx="2.4" ry="4.6" transform="rotate(-32 13.8 5.8)" fill="#1a1212"/><rect width="20" height="20" fill="url(#bg1)"/></g><circle cx="10" cy="10" r="8.8" fill="none" stroke="#8a2020" stroke-width="0.5" opacity="0.6"/></svg>
<svg class="ic" style="left:8px;top:193px" width="19" height="20" viewBox="0 0 19 20"><path d="M9.5 1V19" stroke="#111" stroke-width="1"/><path d="M1.5 4.5H4.5V8.5H7.5V11.5H4.5V15.5H1.5Z" fill="none" stroke="#2a78a8" stroke-width="1"/><path d="M17.5 4.5H14.5V8.5H11.5V11.5H14.5V15.5H17.5Z" fill="none" stroke="#111" stroke-width="1"/></svg>
<svg class="ic" style="left:10px;top:378px" width="19" height="20" viewBox="0 0 19 20"><path d="M9.5 1V19" stroke="#111" stroke-width="1"/><path d="M1.5 4.5H4.5V8.5H7.5V11.5H4.5V15.5H1.5Z" fill="none" stroke="#2a78a8" stroke-width="1"/><path d="M17.5 4.5H14.5V8.5H11.5V11.5H14.5V15.5H17.5Z" fill="none" stroke="#111" stroke-width="1"/></svg>
<svg class="ic" style="left:199px;top:195px" width="16" height="16" viewBox="0 0 16 16"><circle cx="8" cy="8" r="6.8" fill="#fdfdfd" stroke="#333" stroke-width="1.2"/><text x="8" y="12" text-anchor="middle" font-family="Liberation Sans, sans-serif" font-size="11" font-weight="700" fill="#1d5f8f">?</text></svg>
<svg class="ic" style="left:6px;top:223px" width="16" height="14" viewBox="0 0 16 14"><path d="M1.8 8L6 12L14.2 2" fill="none" stroke="#2a9a1c" stroke-width="2.4"/></svg>
<svg class="ic" style="left:35px;top:224px" width="13" height="13" viewBox="0 0 13 13"><path d="M1.5 1.5L11 11.5M11 1.5L1.5 11.5" fill="none" stroke="#e01e10" stroke-width="2"/></svg>
<svg class="ic" style="left:59px;top:225px" width="16" height="12" viewBox="0 0 16 12"><path d="M1 5.2H7.5" stroke="#9a9a9a" stroke-width="1.2"/><path d="M6.8 5.2L8.6 1.6V3.6L11.8 4.2L15 1.4V9.4L11.8 6.4L8.6 7V9Z" fill="#8e8e8e"/></svg>
<svg class="ic" style="left:207px;top:261px" width="12" height="8" viewBox="0 0 12 8"><path d="M1.2 6.5L6 1.8L10.8 6.5" fill="none" stroke="#5a5a5a" stroke-width="2"/></svg>
<svg class="ic" style="left:207px;top:341px" width="12" height="8" viewBox="0 0 12 8"><path d="M1.2 6.5L6 1.8L10.8 6.5" fill="none" stroke="#5a5a5a" stroke-width="2"/></svg>
<svg class="ic" style="left:38px;top:458px" width="13" height="13" viewBox="0 0 13 13"><path d="M2.8 6.5L5.3 9.3L10.3 3" fill="none" stroke="#222" stroke-width="1.3"/></svg>
<svg class="ic" style="left:11px;top:500px" width="18" height="20" viewBox="0 0 18 20"><path d="M1.5 5.5L11.5 2.2V14.5L1.5 18Z" fill="#f4f8fb" stroke="#2a78a8" stroke-width="1"/><path d="M7 0.5V19.5" stroke="#111" stroke-width="1" stroke-dasharray="3 1.2 1 1.2"/><path d="M16.5 4.5H12.5V8H9.5V12H12.5V15.5H16.5Z" fill="#f7f7f7" stroke="#111" stroke-width="1.1"/></svg>
<svg class="ic" style="left:236px;top:147px" width="5" height="8" viewBox="0 0 5 8"><path d="M0 0L4.4 3.7L0 7.4Z" fill="#222"/></svg>
<svg class="ic" style="left:253px;top:142px" width="20" height="20" viewBox="0 0 20 20"><path d="M1.5 8.5L5.5 6.5V3L9 1.5L12 2.8V7L16.5 9.5V13.5L9.5 17.5L1.5 13Z" fill="#f0c524" stroke="#7a5c00" stroke-width="1" stroke-linejoin="round"/><path d="M5.5 3L9 4.5V9L1.5 8.5M9 9L13 11.5L16.5 9.5M13 11.5V15.5" fill="none" stroke="#a47e08" stroke-width="0.8"/><path d="M13 11.5L16.5 9.5V13.5L13 15.5Z" fill="#ffe468"/>
<path d="M8.5 3.8L12.5 1.5L17.5 3.5V9L13.2 11.3L8.5 9Z" fill="#7cc4e4" stroke="#134a68" stroke-width="1" stroke-linejoin="round"/><path d="M8.5 3.8L13.2 5.8L17.5 3.5M13.2 5.8V11.3" fill="none" stroke="#134a68" stroke-width="0.8"/></svg>
<svg class="ic" style="left:1896px;top:168px" width="20" height="20" viewBox="0 0 20 20"><defs><radialGradient id="rs" cx="0.5" cy="0.25" r="0.75"><stop offset="0" stop-color="#5aa4d8"/><stop offset="0.45" stop-color="#15598c"/><stop offset="1" stop-color="#083a62"/></radialGradient></defs><circle cx="9.8" cy="9.8" r="9.6" fill="url(#rs)"/><circle cx="9.8" cy="9.8" r="3.9" fill="none" stroke="#2d7fb8" stroke-width="0.9"/><path d="M8.4 7.3L12.6 9.8L8.4 12.3Z" fill="none" stroke="#9fd0f0" stroke-width="1"/><path d="M2.8 9.8H4.6M15.4 9.8H17M9 3.5H10.8M8.8 15.8H11" stroke="#b8dcf4" stroke-width="1.3"/></svg>
<svg class="ic" style="left:1896px;top:192px" width="20" height="20" viewBox="0 0 20 20"><path d="M1.5 10.5L10 2.3L18.5 10.5" fill="none" stroke="#15507a" stroke-width="2.6" stroke-linejoin="miter"/><path d="M2.3 10L10 2.8L17.7 10" fill="none" stroke="#4a9ac8" stroke-width="0.9"/><path d="M4.3 10.5V18.5H15.7V10.5" fill="#fff" stroke="#222" stroke-width="1.1"/><path d="M8 18.5V12.5H12V18.5" fill="none" stroke="#222" stroke-width="1.1"/></svg>
<svg class="ic" style="left:1897px;top:216px" width="18" height="20" viewBox="0 0 18 20"><path d="M2.5 4L7 6.2V18L2.5 15.6Z" fill="#fff" stroke="#333" stroke-width="0.9" stroke-linejoin="round"/><path d="M7.0 6.2H9.9V18.0H7.0Z" fill="#fdfdfd" stroke="#333" stroke-width="0.9" stroke-linejoin="round"/><path d="M7.0 6.2L2.5 4.0H5.4L9.9 6.2Z" fill="#fff" stroke="#333" stroke-width="0.9" stroke-linejoin="round"/><path d="M9.9 5.3H12.8V17.1H9.9Z" fill="#fdfdfd" stroke="#333" stroke-width="0.9" stroke-linejoin="round"/><path d="M9.9 5.3L5.4 3.1H8.3L12.8 5.3Z" fill="#fff" stroke="#333" stroke-width="0.9" stroke-linejoin="round"/><path d="M12.8 4.4H15.7V16.2H12.8Z" fill="#fdfdfd" stroke="#333" stroke-width="0.9" stroke-linejoin="round"/><path d="M12.8 4.4L8.3 2.2H11.2L15.7 4.4Z" fill="#fff" stroke="#333" stroke-width="0.9" stroke-linejoin="round"/></svg>
<svg class="ic" style="left:1895px;top:240px" width="22" height="20" viewBox="0 0 22 20"><path d="M1.5 17.5V3Q1.5 2 2.5 2H7.5L9 4H16Q17 4 17 5V7" fill="#e8e8e8" stroke="#444" stroke-width="1"/><path d="M1.5 17.5L5.5 7H20.5L16.5 17.5Z" fill="#fdfdfd" stroke="#333" stroke-width="1.1" stroke-linejoin="round"/></svg>
<svg class="ic" style="left:1896px;top:264px" width="20" height="20" viewBox="0 0 20 20"><rect x="1.5" y="2" width="17" height="15.5" rx="1.5" fill="#fafafa" stroke="#444" stroke-width="1"/><path d="M3.5 4H10.5V6.6H3.5ZM12.5 4H16V6.6H12.5ZM5.8 8.2H8.6V11.8H12V14.8H3V11.8H5.8Z" fill="#f6c81e" stroke="#b08800" stroke-width="0.7"/><rect x="14.5" y="8.2" width="2.4" height="7.6" fill="#ccc" stroke="#888" stroke-width="0.6"/></svg>
<svg class="ic" style="left:1897px;top:289px" width="18" height="18" viewBox="0 0 18 18"><defs><radialGradient id="bg2" cx="0.35" cy="0.3" r="0.8"><stop offset="0" stop-color="#fff" stop-opacity="0.75"/><stop offset="0.5" stop-color="#fff" stop-opacity="0"/></radialGradient><clipPath id="bc2"><circle cx="9" cy="9" r="8"/></clipPath></defs><g clip-path="url(#bc2)"><rect width="18" height="18" fill="#d8262a"/><path d="M0 0H8.5L9 9L0 11Z" fill="#2a6ad4"/><path d="M0 10.8L9 9L10.5 18H0Z" fill="#30a834"/><path d="M9 9L18 8V18H10.5Z" fill="#f0c21a"/><rect width="18" height="18" fill="url(#bg2)"/></g></svg>
<svg class="ic" style="left:1896px;top:312px" width="20" height="20" viewBox="0 0 20 20"><rect x="1.5" y="1.8" width="17" height="16.6" rx="1" fill="#fff" stroke="#1d3a50" stroke-width="1.1"/><rect x="2" y="2.3" width="16" height="3" fill="#4a98c8"/><path d="M2 5.5H18" stroke="#1d3a50" stroke-width="0.8"/><g fill="#2a78a8" stroke="#134a68" stroke-width="0.5"><rect x="3.6" y="7.4" width="3.6" height="2.3"/><rect x="3.6" y="11.2" width="3.6" height="2.3"/><rect x="3.6" y="15" width="3.6" height="2.3"/></g><path d="M8.8 8.5H16.5M8.8 12.3H16.5M8.8 16.1H16.5" stroke="#222" stroke-width="1"/></svg>
<svg class="ic" style="left:1896px;top:337px" width="21" height="20" viewBox="0 0 21 20"><path d="M2 3Q2 2 3 2H12Q13 2 13 3V9.5Q13 10.5 12 10.5H6.5L3.5 13.5V10.5H3Q2 10.5 2 9.5Z" fill="#5aa8d4" stroke="#1d5a84" stroke-width="1"/><path d="M9 8.5Q9 7.5 10 7.5H18Q19 7.5 19 8.5V13.5Q19 14.5 18 14.5H17.5V17.5L14.5 14.5H10Q9 14.5 9 13.5Z" fill="#fdfdfd" stroke="#444" stroke-width="1"/></svg>
<svg class="ic" style="left:1723px;top:843px" width="18" height="16" viewBox="0 0 18 16"><path d="M5.5 1L10 9.6H1Z" fill="#ffe800" stroke="#c4560e" stroke-width="1" stroke-linejoin="round"/><path d="M5.5 3.7V6.3" stroke="#111" stroke-width="1.1"/><circle cx="5.5" cy="7.8" r="0.6" fill="#111"/><path d="M1 11.6Q9.5 12.8 12.3 4.2" fill="none" stroke="#111" stroke-width="1.3"/><path d="M12.5 0.6L16 4.8H9Z" fill="#111"/><g fill="#154a70"><rect x="1" y="13.5" width="2" height="1.6"/><rect x="4" y="13.5" width="2" height="1.6"/><rect x="7" y="12.2" width="3" height="2.9"/><rect x="11" y="9.6" width="3" height="5.5"/></g></svg>
<svg class="ic" style="left:1867px;top:850px" width="7" height="4" viewBox="0 0 7 4"><path d="M0 3.6L3.2 0L6.4 3.6Z" fill="#b0b0b0"/></svg>
<svg class="ic" style="left:1898px;top:844px" width="20" height="16" viewBox="0 0 20 16"><path d="M3 2.1L9.6 1.1L17.7 5.4V8L11.9 14.3L2.2 9.75L2.4 7.2Z" fill="#f2f2f2" stroke="#222" stroke-width="1.1" stroke-linejoin="round"/><path d="M2.4 7.2L11.4 11.3L17.7 5.4M11.4 11.3L11.9 14.3" fill="none" stroke="#222" stroke-width="1"/><circle cx="7.5" cy="4.4" r="2.1" fill="#fff" stroke="#222" stroke-width="1"/><path d="M9.8 8L12.1 5.7" stroke="#222" stroke-width="1.2"/></svg>
<svg class="ic" style="left:1px;top:828px" width="64" height="13" viewBox="0 0 64 13"><g fill="#8c8c8c"><rect x="4" y="2" width="1.6" height="9"/><path d="M12 2V11L6 6.5Z"/><path d="M27 2V11L21 6.5Z"/><path d="M37 2V11L43 6.5Z"/><path d="M52 2V11L58 6.5Z"/><rect x="58.5" y="2" width="1.6" height="9"/></g><path d="M16 0V13M32 0V13M48 0V13" stroke="#9b9b9b" stroke-width="1"/></svg>
<div class="t" style="left:1001px;top:9.69px;font-size:11px;line-height:13px;letter-spacing:0.128px;">Sketch1 of Gear *</div>
<div class="t" style="left:1558px;top:9.69px;font-size:11px;line-height:13px;letter-spacing:-0.010px;color:#606060;">Search Commands</div>
<div class="t" style="left:18.7px;top:59.69px;font-size:11px;line-height:13px;letter-spacing:-0.336px;color:#b3b3b3;">Exit</div>
<div class="t" style="left:10.6px;top:72.69px;font-size:11px;line-height:13px;letter-spacing:-0.107px;color:#b3b3b3;">Sketch</div>
<div class="t" style="left:67.5px;top:59.69px;font-size:11px;line-height:13px;letter-spacing:-0.269px;color:#b3b3b3;">Smart</div>
<div class="t" style="left:54.6px;top:72.69px;font-size:11px;line-height:13px;letter-spacing:0.226px;color:#b3b3b3;">Dimension</div>
<div class="t" style="left:279.4px;top:59.69px;font-size:11px;line-height:13px;letter-spacing:-0.398px;color:#b3b3b3;">Trim</div>
<div class="t" style="left:271.3px;top:72.69px;font-size:11px;line-height:13px;letter-spacing:0.115px;color:#b3b3b3;">Entities</div>
<div class="t" style="left:319.8px;top:59.69px;font-size:11px;line-height:13px;letter-spacing:0.067px;color:#b3b3b3;">Convert</div>
<div class="t" style="left:320.3px;top:72.69px;font-size:11px;line-height:13px;letter-spacing:0.115px;color:#b3b3b3;">Entities</div>
<div class="t" style="left:372.5px;top:66.69px;font-size:11px;line-height:13px;letter-spacing:0.307px;color:#b3b3b3;">Offset</div>
<div class="t" style="left:369.4px;top:79.69px;font-size:11px;line-height:13px;letter-spacing:0.115px;color:#b3b3b3;">Entities</div>
<div class="t" style="left:420.6px;top:66.69px;font-size:11px;line-height:13px;letter-spacing:0.307px;color:#b3b3b3;">Offset</div>
<div class="t" style="left:428.8px;top:79.69px;font-size:11px;line-height:13px;letter-spacing:0.156px;color:#b3b3b3;">On</div>
<div class="t" style="left:417.5px;top:92.69px;font-size:11px;line-height:13px;letter-spacing:-0.132px;color:#b3b3b3;">Surface</div>
<div class="t" style="left:488px;top:40.69px;font-size:11px;line-height:13px;letter-spacing:0.277px;color:#b3b3b3;">Mirror Entities</div>
<div class="t" style="left:488px;top:66.69px;font-size:11px;line-height:13px;letter-spacing:0.105px;color:#b3b3b3;">Linear Sketch Pattern</div>
<div class="t" style="left:488px;top:92.69px;font-size:11px;line-height:13px;letter-spacing:0.151px;color:#b3b3b3;">Move Entities</div>
<div class="t" style="left:642.5px;top:59.69px;font-size:11px;line-height:13px;letter-spacing:0.148px;color:#b3b3b3;">Display/Delete</div>
<div class="t" style="left:655.6px;top:72.69px;font-size:11px;line-height:13px;letter-spacing:0.127px;color:#b3b3b3;">Relations</div>
<div class="t" style="left:726.5px;top:66.69px;font-size:11px;line-height:13px;letter-spacing:-0.068px;color:#b3b3b3;">Repair</div>
<div class="t" style="left:726.5px;top:79.69px;font-size:11px;line-height:13px;letter-spacing:-0.107px;color:#b3b3b3;">Sketch</div>
<div class="t" style="left:773.8px;top:59.69px;font-size:11px;line-height:13px;letter-spacing:0.175px;">Quick</div>
<div class="t" style="left:773.5px;top:72.69px;font-size:11px;line-height:13px;letter-spacing:-0.241px;">Snaps</div>
<div class="t" style="left:819.4px;top:66.69px;font-size:11px;line-height:13px;letter-spacing:0.130px;">Rapid</div>
<div class="t" style="left:817.5px;top:79.69px;font-size:11px;line-height:13px;letter-spacing:-0.107px;">Sketch</div>
<div class="t" style="left:861.3px;top:66.69px;font-size:11px;line-height:13px;letter-spacing:0.256px;">Instant2D</div>
<div class="t" style="left:925.3px;top:66.69px;font-size:11px;line-height:13px;letter-spacing:0.010px;">Shaded</div>
<div class="t" style="left:928px;top:79.69px;font-size:11px;line-height:13px;letter-spacing:-0.023px;">Sketch</div>
<div class="t" style="left:921px;top:92.69px;font-size:11px;line-height:13px;letter-spacing:0.357px;">Contours</div>
<div class="t" style="left:7px;top:118.84px;font-size:12px;line-height:14px;letter-spacing:-0.420px;">Features</div>
<div class="t" style="left:67px;top:118.84px;font-size:12px;line-height:14px;letter-spacing:-0.060px;font-weight:700;">Sketch</div>
<div class="t" style="left:123px;top:118.84px;font-size:12px;line-height:14px;letter-spacing:0.164px;">Markup</div>
<div class="t" style="left:180px;top:118.84px;font-size:12px;line-height:14px;letter-spacing:-0.338px;">Evaluate</div>
<div class="t" style="left:240px;top:118.84px;font-size:12px;line-height:14px;letter-spacing:-0.122px;">MBD Dimensions</div>
<div class="t" style="left:347px;top:118.84px;font-size:12px;line-height:14px;letter-spacing:-0.465px;">SOLIDWORKS Add-Ins</div>
<div class="t" style="left:480px;top:118.84px;font-size:12px;line-height:14px;letter-spacing:0.097px;">Simulation</div>
<div class="t" style="left:560px;top:118.84px;font-size:12px;line-height:14px;letter-spacing:-0.224px;">MBD</div>
<div class="t" style="left:609px;top:118.84px;font-size:12px;line-height:14px;letter-spacing:-0.153px;">Analysis Preparation</div>
<div class="t" style="left:276px;top:146.19px;font-size:11px;line-height:13px;letter-spacing:0.276px;">Gear  (Default&lt;&lt;Default&gt;_Display State 1&gt;)</div>
<div class="t" style="left:33px;top:196.84px;font-size:12px;line-height:14px;letter-spacing:0.221px;font-weight:700;">Mirror</div>
<div class="t" style="left:8px;top:259.69px;font-size:11px;line-height:13px;letter-spacing:-0.069px;font-weight:700;color:#3d4152;">Message</div>
<div class="t" style="left:8px;top:279.69px;font-size:11px;line-height:13px;letter-spacing:0.239px;">Select entities to mirror and a sketch</div>
<div class="t" style="left:8px;top:292.69px;font-size:11px;line-height:13px;letter-spacing:0.320px;">line, linear model edge, plane or planar</div>
<div class="t" style="left:8px;top:305.69px;font-size:11px;line-height:13px;letter-spacing:0.381px;">face to mirror about</div>
<div class="t" style="left:8px;top:339.69px;font-size:11px;line-height:13px;letter-spacing:-0.080px;font-weight:700;color:#3d4152;">Options</div>
<div class="t" style="left:38px;top:359.69px;font-size:11px;line-height:13px;letter-spacing:0.256px;">Entities to mirror:</div>
<div class="t" style="left:43px;top:379.69px;font-size:11px;line-height:13px;letter-spacing:0.016px;">Line3</div>
<div class="t" style="left:43px;top:395.69px;font-size:11px;line-height:13px;letter-spacing:0.016px;">Line4</div>
<div class="t" style="left:43px;top:411.69px;font-size:11px;line-height:13px;letter-spacing:-0.156px;">Arc2</div>
<div class="t" style="left:55px;top:458.69px;font-size:11px;line-height:13px;letter-spacing:-0.172px;">Copy</div>
<div class="t" style="left:38px;top:481.19px;font-size:11px;line-height:13px;letter-spacing:0.511px;">Mirror about:</div>
<div class="t" style="left:43px;top:501.69px;font-size:11px;line-height:13px;letter-spacing:-0.184px;color:#fff;">Line1</div>
<div class="t" style="left:241px;top:809.84px;font-size:12px;line-height:14px;letter-spacing:0.279px;font-weight:700;color:#000;">*Front</div>
<div class="t" style="left:79px;top:825.84px;font-size:12px;line-height:14px;letter-spacing:0.066px;font-weight:700;">Model</div>
<div class="t" style="left:133px;top:825.84px;font-size:12px;line-height:14px;letter-spacing:-0.434px;">3D Views</div>
<div class="t" style="left:200px;top:825.84px;font-size:12px;line-height:14px;letter-spacing:-0.003px;">Motion Study 1</div>
<div class="t" style="left:0.5px;top:844.84px;font-size:12px;line-height:14px;letter-spacing:-0.023px;">Select a line, linear model edge or planar entity to mirror about</div>
<div class="t" style="left:1402px;top:844.84px;font-size:12px;line-height:14px;letter-spacing:-0.087px;">Total Length: 1.06in</div>
<div class="t" style="left:1527px;top:844.84px;font-size:12px;line-height:14px;letter-spacing:-0.079px;">Fully Defined</div>
<div class="t" style="left:1614px;top:844.84px;font-size:12px;line-height:14px;letter-spacing:-0.159px;">Editing Sketch1</div>
<div class="t" style="left:1823px;top:844.84px;font-size:12px;line-height:14px;letter-spacing:-1.115px;color:#b0b0b0;">IPS</div>
</body></html>
